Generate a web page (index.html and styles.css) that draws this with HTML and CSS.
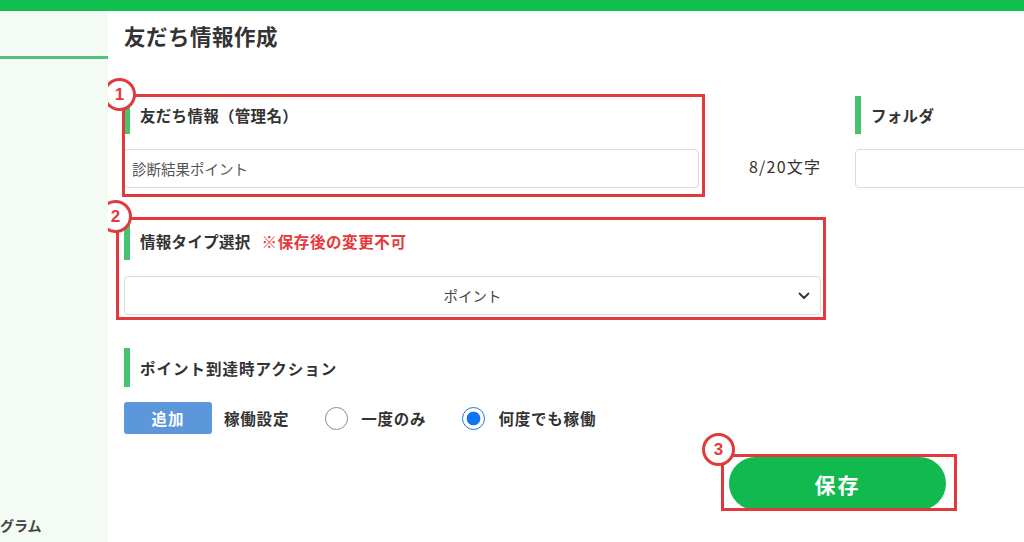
FILE: index.html
```html
<!DOCTYPE html>
<html lang="ja">
<head>
<meta charset="utf-8">
<title>友だち情報作成</title>
<link rel="stylesheet" href="styles.css">
</head>
<body>
<div class="topbar"></div>
<div class="layout">
  <aside class="sidebar">
    <div class="side-line"></div>
    <div class="side-item">グラム</div>
  </aside>
  <main class="main">
    <h1 class="title">友だち情報作成</h1>

    <div class="row1">
      <div class="group group1">
        <div class="label"><span class="bar"></span><span class="label-text">友だち情報（管理名）</span></div>
        <div class="input">診断結果ポイント</div>
        <div class="anno anno1"><span class="badge">1</span></div>
      </div>
      <div class="counter">8/20文字</div>
      <div class="group folder">
        <div class="label"><span class="bar"></span><span class="label-text">フォルダ</span></div>
        <div class="input input-wide"></div>
      </div>
    </div>

    <div class="group group2">
      <div class="label"><span class="bar"></span><span class="label-text">情報タイプ選択</span><span class="warn">※保存後の変更不可</span></div>
      <div class="select">
        <span>ポイント</span>
        <svg class="chev" width="12" height="8" viewBox="0 0 12 8"><path d="M1.5 1.5 L6 6 L10.5 1.5" fill="none" stroke="#333" stroke-width="1.8" stroke-linecap="round" stroke-linejoin="round"/></svg>
      </div>
      <div class="anno anno2"><span class="badge">2</span></div>
    </div>

    <div class="group group3">
      <div class="label label3"><span class="bar"></span><span class="label-text">ポイント到達時アクション</span></div>
      <div class="actions">
        <button class="add-btn">追加</button>
        <span class="act-text">稼働設定</span>
        <span class="radio"></span>
        <span class="radio-text">一度のみ</span>
        <span class="radio checked"></span>
        <span class="radio-text">何度でも稼働</span>
      </div>
    </div>

    <div class="save-row">
      <div class="save-wrap">
        <button class="save-btn">保存</button>
        <div class="anno anno3"><span class="badge">3</span></div>
      </div>
    </div>
  </main>
</div>
</body>
</html>
```

FILE: styles.css
```css
* { box-sizing: border-box; }
html, body { margin: 0; padding: 0; }
body {
  width: 1024px;
  height: 542px;
  overflow: hidden;
  background: #fff;
  font-family: "Noto Sans CJK JP", "Noto Sans", sans-serif;
  color: #333;
}
.topbar { height: 11px; background: #10bf50; }
.layout { display: flex; height: 531px; }
.sidebar {
  width: 108px;
  flex: none;
  background: #f4faf4;
  display: flex;
  flex-direction: column;
  overflow: hidden;
}
.side-line { margin-top: 45px; height: 3px; background: #52c27e; }
.side-item {
  margin-top: auto;
  margin-bottom: 7px;
  margin-left: 0;
  font-size: 14px;
  font-weight: 700;
  color: #444;
  line-height: 20px;
  white-space: nowrap;
}
.main { flex: 1; padding-left: 16px; overflow: hidden; }
.title {
  margin: 10px 0 45px;
  font-size: 21.5px;
  line-height: 30px;
  font-weight: 700;
  letter-spacing: 0.5px;
  color: #333;
}
.group { position: relative; }
.row1 { display: flex; align-items: flex-start; }
.group1 { width: 575px; flex: none; }
.label { display: flex; align-items: center; height: 38px; }
.bar { width: 6px; align-self: stretch; background: #44c46f; flex: none; }
.label-text {
  margin-left: 10px;
  font-size: 15.5px;
  font-weight: 700;
  letter-spacing: 0.3px;
  color: #333;
}
.warn {
  margin-left: 11px;
  font-size: 15.5px;
  font-weight: 700;
  letter-spacing: 0.6px;
  color: #e5393c;
}
.input {
  margin-top: 15px;
  height: 39px;
  border: 1px solid #dcdcdc;
  border-radius: 4px;
  background: #fff;
  padding-left: 7px;
  font-size: 14.5px;
  line-height: 37px;
  color: #555;
}
.counter {
  margin-left: 50px;
  margin-top: 53px;
  width: 73px;
  flex: none;
  font-size: 16px;
  letter-spacing: 1.2px;
  line-height: 35px;
  color: #333;
  white-space: nowrap;
}
.folder { margin-left: 33px; flex: none; width: 300px; }
.group2 { margin-top: 34px; width: 697px; }
.select {
  position: relative;
  margin-top: 16px;
  height: 39px;
  border: 1px solid #dcdcdc;
  border-radius: 4px;
  background: #fff;
  text-align: center;
  font-size: 14.5px;
  line-height: 37px;
  color: #444;
}
.chev { position: absolute; right: 10px; top: 15px; }
.group3 { margin-top: 33px; }
.label3 { height: 39px; }
.label3 .label-text { letter-spacing: 1px; }
.actions { margin-top: 15px; height: 32px; display: flex; align-items: center; }
.add-btn {
  width: 88px;
  height: 32px;
  border: 0;
  border-radius: 3px;
  background: #5b97da;
  color: #fff;
  font-family: inherit;
  font-size: 15.5px;
  font-weight: 700;
  letter-spacing: 1px;
  padding: 0;
}
.act-text, .radio-text {
  font-size: 15.5px;
  font-weight: 700;
  letter-spacing: 0.8px;
  color: #333;
}
.act-text { margin-left: 12px; }
.radio {
  width: 23px;
  height: 23px;
  border-radius: 50%;
  border: 1.5px solid #8a8a8a;
  background: #fff;
  margin-left: 36px;
  flex: none;
}
.radio.checked {
  border: 1.5px solid #1a73e8;
  background: radial-gradient(circle, #1473f0 0 6.5px, #fff 7.2px);
}
.radio-text { margin-left: 13px; }
.save-row { margin-top: 23px; padding-left: 605px; }
.save-wrap { position: relative; width: 217px; }
.save-btn {
  display: block;
  width: 217px;
  height: 53px;
  border: 0;
  border-radius: 27px;
  background: #12b94f;
  color: #fff;
  font-family: inherit;
  font-size: 21px;
  font-weight: 700;
  letter-spacing: 2px;
  padding: 0;
}
.anno {
  position: absolute;
  border: 3px solid #e2393d;
  pointer-events: none;
}
.anno1 { left: -2px; top: -2px; right: -6px; bottom: -9px; }
.anno2 { left: -8px; top: -5px; right: -5px; bottom: -5px; }
.anno3 { left: -8px; top: -3px; right: -11px; bottom: -1px; }
.badge {
  position: absolute;
  width: 33px;
  height: 33px;
  border-radius: 50%;
  border: 3px solid #e2393d;
  background: #fff;
  color: #e2393d;
  font-family: "Liberation Sans", "Noto Sans", sans-serif;
  font-weight: 700;
  font-size: 17px;
  line-height: 27px;
  text-align: center;
}
.anno1 .badge { left: -22px; top: -19px; }
.anno2 .badge { left: -20px; top: -20px; }
.anno3 .badge { left: -22px; top: -24px; }
```
